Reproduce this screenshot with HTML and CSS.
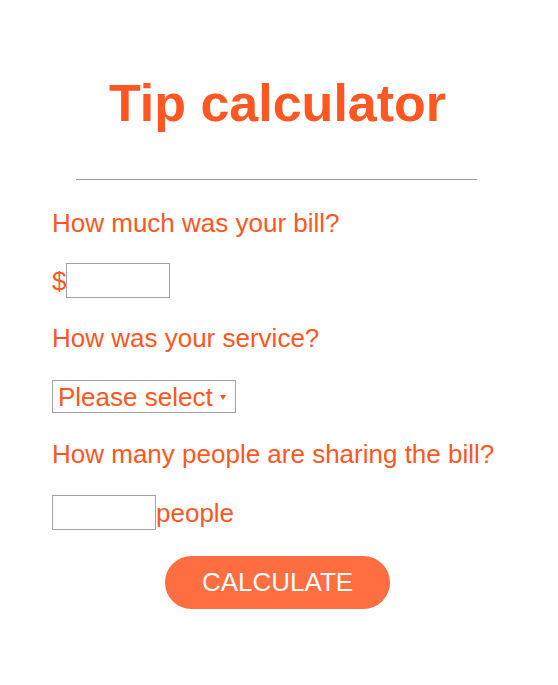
FILE: index.html
```html
<!DOCTYPE html>
<html lang="en">
<head>
<meta charset="utf-8">
<title>Tip calculator</title>
<link rel="stylesheet" href="styles.css">
</head>
<body>
<main class="calc">
  <h1 class="title">Tip calculator</h1>
  <hr class="rule">
  <form class="form">
    <label class="question" for="bill">How much was your bill?</label>
    <div class="row row-bill"><span class="unit">$</span><input id="bill" class="field" type="text"></div>
    <label class="question q-service" for="service">How was your service?</label>
    <div class="row row-select">
      <span class="select-wrap">
        <select id="service" class="select">
          <option>Please select</option>
          <option>30% - Outstanding</option>
          <option>20% - Good</option>
          <option>15% - It was OK</option>
          <option>10% - Bad</option>
          <option>5% - Terrible</option>
        </select>
      </span>
    </div>
    <label class="question q-people" for="people">How many people are sharing the bill?</label>
    <div class="row row-people"><input id="people" class="field" type="text"><span class="unit">people</span></div>
    <div class="actions"><button type="button" class="btn">CALCULATE</button></div>
  </form>
</main>
</body>
</html>
```
FILE: styles.css
```css
html, body {
  margin: 0;
  padding: 0;
  background: #ffffff;
}
body {
  font-family: "Liberation Sans", Arial, sans-serif;
  color: #ff5722;
}
.calc {
  width: 451px;
  margin-left: 52px;
  padding-top: 74px;
}
.title {
  margin: 0;
  text-align: center;
  font-size: 52px;
  line-height: 58px;
  font-weight: bold;
  color: #ff5722;
}
.rule {
  width: 401px;
  margin: 47px auto 0 24px;
  border: 0;
  border-top: 1px solid #9a9a9a;
  height: 0;
}
.form {
  display: flex;
  flex-direction: column;
  padding-top: 28px;
}
.question {
  font-size: 26px;
  line-height: 30px;
}
.row {
  display: flex;
  align-items: center;
  font-size: 26px;
  line-height: 30px;
}
.row-bill { margin-top: 25px; }
.q-service { margin-top: 25px; }
.row-select { margin-top: 27px; }
.q-people { margin-top: 26px; }
.row-people { margin-top: 26px; }
.actions { margin-top: 26px; }
.unit {
  font-size: 26px;
}
.field {
  box-sizing: border-box;
  width: 104px;
  height: 35px;
  margin: 0;
  border: 1px solid #a3a3a3;
  background: #fff;
  font-family: inherit;
  font-size: 20px;
  color: #ff5722;
  padding: 0 4px;
}
.select-wrap {
  position: relative;
  display: inline-block;
}
.select-wrap::after {
  content: "";
  position: absolute;
  right: 10px;
  top: 15px;
  border-left: 3px solid transparent;
  border-right: 3px solid transparent;
  border-top: 5px solid #ff5722;
  pointer-events: none;
}
.select {
  appearance: none;
  -webkit-appearance: none;
  box-sizing: border-box;
  width: 184px;
  height: 33px;
  margin: 0;
  padding: 0 0 0 5px;
  border: 1px solid #a3a3a3;
  border-radius: 0;
  background: #fff;
  font-family: inherit;
  font-size: 26px;
  color: #ff5722;
}
.actions {
  display: flex;
  justify-content: center;
}
.btn {
  width: 225px;
  height: 53px;
  border: 0;
  border-radius: 27px;
  background: #ff6e40;
  color: #ffffff;
  font-family: inherit;
  font-size: 26px;
  padding: 0;
}
```
